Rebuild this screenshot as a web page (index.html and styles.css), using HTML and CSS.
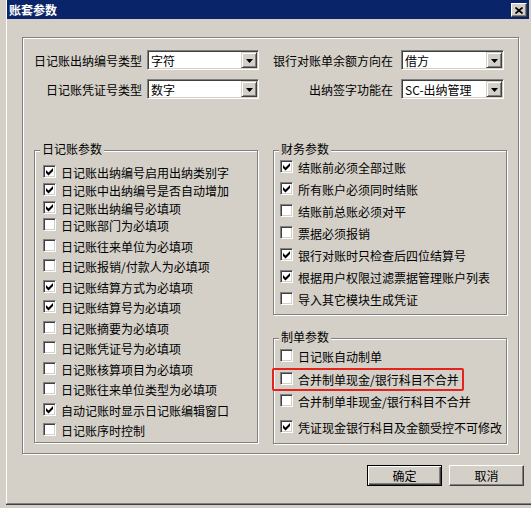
FILE: index.html
```html
<!DOCTYPE html>
<html lang="zh-CN">
<head>
<meta charset="utf-8">
<title>账套参数</title>
<link rel="stylesheet" href="styles.css">
</head>
<body>
<div class="window">
  <div class="titlebar">
    <span class="title">账套参数</span>
    <span class="close"><svg width="8" height="7" viewBox="0 0 8 7"><path d="M0.5 0.5 L7.5 6.5 M7.5 0.5 L0.5 6.5" stroke="#000" stroke-width="1.7" fill="none"/></svg></span>
  </div>
  <div class="panel">
    <div class="frame">
      <div class="field-row">
        <span class="lbl lbl-a">日记账出纳编号类型</span>
        <div class="combo combo-a"><span class="combo-text">字符</span><span class="combo-btn"><svg width="7" height="4" viewBox="0 0 7 4"><polygon points="0,0 7,0 3.5,4" fill="#000"/></svg></span></div>
        <span class="lbl lbl-b">银行对账单余额方向在</span>
        <div class="combo combo-b"><span class="combo-text">借方</span><span class="combo-btn"><svg width="7" height="4" viewBox="0 0 7 4"><polygon points="0,0 7,0 3.5,4" fill="#000"/></svg></span></div>
      </div>
      <div class="field-row second">
        <span class="lbl lbl-a">日记账凭证号类型</span>
        <div class="combo combo-a"><span class="combo-text">数字</span><span class="combo-btn"><svg width="7" height="4" viewBox="0 0 7 4"><polygon points="0,0 7,0 3.5,4" fill="#000"/></svg></span></div>
        <span class="lbl lbl-b">出纳签字功能在</span>
        <div class="combo combo-b"><span class="combo-text">SC-出纳管理</span><span class="combo-btn"><svg width="7" height="4" viewBox="0 0 7 4"><polygon points="0,0 7,0 3.5,4" fill="#000"/></svg></span></div>
      </div>
      <div class="columns">
        <div class="group group-left">
          <span class="group-title">日记账参数</span>
          <div class="opt"><span class="cb on"><svg viewBox="0 0 9 9"><polygon points="1,3 3.5,5.5 8,1 8,4 3.5,8.5 1,6"/></svg></span><span>日记账出纳编号启用出纳类别字</span></div>
          <div class="opt gap-1"><span class="cb on"><svg viewBox="0 0 9 9"><polygon points="1,3 3.5,5.5 8,1 8,4 3.5,8.5 1,6"/></svg></span><span>日记账中出纳编号是否自动增加</span></div>
          <div class="opt gap-1"><span class="cb on"><svg viewBox="0 0 9 9"><polygon points="1,3 3.5,5.5 8,1 8,4 3.5,8.5 1,6"/></svg></span><span>日记账出纳编号必填项</span></div>
          <div class="opt gap-0"><span class="cb"></span><span>日记账部门为必填项</span></div>
          <div class="opt"><span class="cb"></span><span>日记账往来单位为必填项</span></div>
          <div class="opt"><span class="cb"></span><span>日记账报销/付款人为必填项</span></div>
          <div class="opt"><span class="cb on"><svg viewBox="0 0 9 9"><polygon points="1,3 3.5,5.5 8,1 8,4 3.5,8.5 1,6"/></svg></span><span>日记账结算方式为必填项</span></div>
          <div class="opt"><span class="cb on"><svg viewBox="0 0 9 9"><polygon points="1,3 3.5,5.5 8,1 8,4 3.5,8.5 1,6"/></svg></span><span>日记账结算号为必填项</span></div>
          <div class="opt"><span class="cb"></span><span>日记账摘要为必填项</span></div>
          <div class="opt"><span class="cb"></span><span>日记账凭证号为必填项</span></div>
          <div class="opt"><span class="cb"></span><span>日记账核算项目为必填项</span></div>
          <div class="opt"><span class="cb"></span><span>日记账往来单位类型为必填项</span></div>
          <div class="opt"><span class="cb on"><svg viewBox="0 0 9 9"><polygon points="1,3 3.5,5.5 8,1 8,4 3.5,8.5 1,6"/></svg></span><span>自动记账时显示日记账编辑窗口</span></div>
          <div class="opt"><span class="cb"></span><span>日记账序时控制</span></div>
        </div>
        <div class="col-right">
          <div class="group group-fin">
            <span class="group-title">财务参数</span>
            <div class="opt"><span class="cb on"><svg viewBox="0 0 9 9"><polygon points="1,3 3.5,5.5 8,1 8,4 3.5,8.5 1,6"/></svg></span><span>结账前必须全部过账</span></div>
            <div class="opt gap-5"><span class="cb on"><svg viewBox="0 0 9 9"><polygon points="1,3 3.5,5.5 8,1 8,4 3.5,8.5 1,6"/></svg></span><span>所有账户必须同时结账</span></div>
            <div class="opt gap-5"><span class="cb"></span><span>结账前总账必须对平</span></div>
            <div class="opt gap-5"><span class="cb"></span><span>票据必须报销</span></div>
            <div class="opt gap-5"><span class="cb on"><svg viewBox="0 0 9 9"><polygon points="1,3 3.5,5.5 8,1 8,4 3.5,8.5 1,6"/></svg></span><span>银行对账时只检查后四位结算号</span></div>
            <div class="opt gap-5"><span class="cb on"><svg viewBox="0 0 9 9"><polygon points="1,3 3.5,5.5 8,1 8,4 3.5,8.5 1,6"/></svg></span><span>根据用户权限过滤票据管理账户列表</span></div>
            <div class="opt gap-5"><span class="cb"></span><span>导入其它模块生成凭证</span></div>
          </div>
          <div class="group group-make">
            <span class="group-title">制单参数</span>
            <div class="opt"><span class="cb"></span><span>日记账自动制单</span></div>
            <div class="opt gap-6 marked"><span class="cb"></span><span>合并制单现金/银行科目不合并</span></div>
            <div class="opt gap-5"><span class="cb"></span><span>合并制单非现金/银行科目不合并</span></div>
            <div class="opt gap-8"><span class="cb on"><svg viewBox="0 0 9 9"><polygon points="1,3 3.5,5.5 8,1 8,4 3.5,8.5 1,6"/></svg></span><span>凭证现金银行科目及金额受控不可修改</span></div>
          </div>
        </div>
      </div>
    </div>
    <div class="buttons">
      <button class="btn btn-default" type="button">确定</button>
      <button class="btn" type="button">取消</button>
    </div>
  </div>
</div>
</body>
</html>
```
FILE: styles.css
```css
html, body {
  margin: 0;
  padding: 0;
  background: #d4d0c8;
}
body {
  font-family: "Noto Sans CJK SC", "Noto Sans", sans-serif;
  font-size: 12px;
  color: #000;
  width: 531px;
  height: 508px;
  overflow: hidden;
}
.window {
  margin-left: 6px;
  width: 525px;
  height: 504px;
  box-sizing: border-box;
  border-left: 1px solid #fff;
  border-bottom: 1px solid #808080;
  box-shadow: 0 1px 0 #404040;
  padding-right: 2px;
}
.titlebar {
  height: 19px;
  background: #0a246a;
  display: flex;
  align-items: center;
  justify-content: space-between;
  padding-left: 2px;
  padding-right: 2px;
}
.title {
  color: #fff;
  font-weight: bold;
  font-size: 12px;
  line-height: 19px;
  letter-spacing: 0;
}
.close {
  width: 16px;
  height: 14px;
  margin-top: 3px;
  margin-bottom: 2px;
  box-sizing: border-box;
  background: #d4d0c8;
  border: 1px solid;
  border-color: #fff #404040 #404040 #fff;
  box-shadow: inset -1px -1px 0 #808080;
  display: flex;
  align-items: center;
  justify-content: center;
}
.close svg { display: block; margin-left: -1px; }
.panel {
  padding: 18px 5px 0 15px;
}
.frame {
  width: 497px;
  height: 417px;
  box-sizing: border-box;
  border: 1px solid #808080;
  box-shadow: inset 1px 1px 0 #fff, 1px 1px 0 #fff;
  padding: 12px 11px 0 11px;
}
.field-row {
  display: flex;
  align-items: center;
  height: 20px;
}
.field-row.second { margin-top: 9px; }
.lbl {
  text-align: right;
  white-space: nowrap;
  line-height: 20px;
  padding-top: 2px;
}
.lbl-a { width: 108px; margin-right: 5px; }
.lbl-b { width: 120px; margin-left: 14px; margin-right: 8px; }
.combo {
  height: 20px;
  box-sizing: border-box;
  background: #fff;
  border: 1px solid;
  border-color: #808080 #fff #fff #808080;
  box-shadow: inset 1px 1px 0 #404040, inset -1px -1px 0 #d4d0c8;
  padding: 1px;
  display: flex;
}
.combo-a { width: 112px; }
.combo-b { width: 103px; }
.combo-text {
  flex: 1;
  padding-left: 2px;
  line-height: 16px;
  padding-top: 1px;
  white-space: nowrap;
  overflow: hidden;
}
.combo-btn {
  width: 16px;
  height: 16px;
  box-sizing: border-box;
  background: #d4d0c8;
  border: 1px solid;
  border-color: #d4d0c8 #404040 #404040 #d4d0c8;
  box-shadow: inset 1px 1px 0 #fff, inset -1px -1px 0 #808080;
  display: flex;
  align-items: center;
  justify-content: center;
}
.combo-btn svg { display: block; margin-top: 1px; }
.columns {
  display: flex;
  gap: 15px;
  margin-top: 51px;
  align-items: flex-start;
}
.col-right {
  width: 234px;
  display: flex;
  flex-direction: column;
}
.group {
  position: relative;
  box-sizing: border-box;
  border: 1px solid #808080;
  box-shadow: inset 1px 1px 0 #fff, 1px 1px 0 #fff;
}
.group-title {
  position: absolute;
  top: -10px;
  left: 5px;
  padding: 0 2px;
  background: #d4d0c8;
  line-height: 16px;
  white-space: nowrap;
}
.group-left {
  width: 224px;
  height: 293px;
  padding: 12px 0 0 8px;
}
.group-fin {
  height: 165px;
  padding: 7px 0 0 6px;
}
.group-make {
  height: 106px;
  margin-top: 23px;
  padding: 7.5px 0 0 6px;
}
.opt {
  display: flex;
  align-items: center;
  height: 17px;
  white-space: nowrap;
}
.opt + .opt { margin-top: 3.5px; }
.opt.gap-0 { margin-top: 0; }
.opt.gap-1 { margin-top: 1px; }
.opt.gap-5 { margin-top: 5px; }
.opt.gap-6 { margin-top: 6.5px; }
.opt.gap-8 { margin-top: 8.5px; }
.opt span:last-child { padding-top: 2px; line-height: 15px; }
.cb {
  width: 13px;
  height: 13px;
  flex: none;
  box-sizing: border-box;
  background: #fff;
  border: 1px solid;
  border-color: #808080 #fff #fff #808080;
  box-shadow: inset 1px 1px 0 #404040, inset -1px -1px 0 #d4d0c8;
  padding: 1px;
  margin-right: 5px;
}
.opt .cb { padding-top: 1px; }
.cb svg {
  display: block;
  width: 9px;
  height: 9px;
  fill: #000;
}
.marked { position: relative; }
.marked::after {
  content: "";
  position: absolute;
  left: -8px;
  top: -2px;
  width: 192px;
  height: 23px;
  box-sizing: border-box;
  border: 2px solid #e3231c;
  border-radius: 2px;
}
.buttons {
  display: flex;
  justify-content: flex-end;
  gap: 7px;
  margin-top: 11px;
}
.btn {
  width: 75px;
  height: 21px;
  box-sizing: border-box;
  margin: 0;
  padding: 1px 0 0 0;
  font-family: inherit;
  font-size: 12px;
  color: #000;
  background: #d4d0c8;
  border: 1px solid;
  border-color: #fff #404040 #404040 #fff;
  box-shadow: inset -1px -1px 0 #808080;
  line-height: 16px;
}
.btn-default {
  border-color: #000;
  box-shadow: inset 1px 1px 0 #fff, inset -1px -1px 0 #404040, inset -2px -2px 0 #808080;
}
```
